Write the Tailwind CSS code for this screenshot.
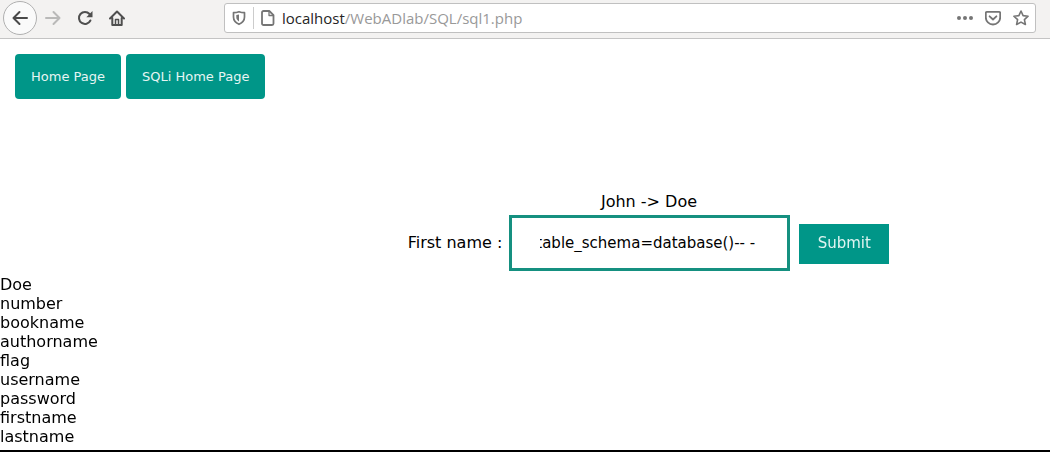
<!DOCTYPE html>
<html lang="en">
<head>
<meta charset="utf-8">
<title>sql1.php</title>
<script src="https://cdn.jsdelivr.net/npm/@tailwindcss/browser@4"></script>
</head>
<body class="flex min-h-screen flex-col bg-white font-['DejaVu_Sans',sans-serif] text-base leading-[19px] text-black">
<header class="flex h-[39px] items-center border-b border-[#c4c4c4] bg-[#f3f2f1] pr-[14px] pl-[3px] pb-[2px]">
  <nav class="flex flex-1 items-center" aria-label="Browser">
    <button aria-label="Back" class="flex size-[34px] shrink-0 items-center justify-center rounded-full border border-[#b0b0b0] bg-[#fafafa] text-[#4a4a4a]">
      <svg class="size-4" viewBox="0 0 16 16" fill="none" stroke="currentColor" stroke-width="2" stroke-linecap="round" stroke-linejoin="round"><path d="M15 8H1.500M7.500 2L1.500 8l6 6"/></svg>
    </button>
    <button aria-label="Forward" class="ml-2 flex size-4 shrink-0 items-center justify-center text-[#b9b9b8]">
      <svg class="size-4" viewBox="0 0 16 16" fill="none" stroke="currentColor" stroke-width="2" stroke-linecap="round" stroke-linejoin="round"><path d="M1 8h13.500M8.500 2l6 6-6 6"/></svg>
    </button>
    <button aria-label="Reload" class="ml-4 flex size-4 shrink-0 items-center justify-center text-[#4f4f4f]">
      <svg class="size-4" viewBox="0 0 16 16" fill="none" stroke="currentColor" stroke-width="2" stroke-linecap="round"><path d="M13.400 10.500A6 6 0 1 1 12.500 4"/><path d="M15.500 1v6.200H9.300z" fill="currentColor" stroke="none"/></svg>
    </button>
    <button aria-label="Home" class="ml-4 flex size-4 shrink-0 items-center justify-center text-[#4f4f4f]">
      <svg class="size-4" viewBox="0 0 16 16" fill="none" stroke="currentColor" stroke-width="2" stroke-linecap="round" stroke-linejoin="round"><path d="M1 8.500L8 1.500l7 7M3.300 8v7h9.400V8"/><path d="M6.500 14.500V9.500h3v5" stroke-width="1.500"/></svg>
    </button>
    <div class="ml-[99px] flex h-[30px] min-w-0 flex-1 items-center rounded-[3px] border border-[#c0c0c0] bg-white pr-[6px] pl-[6px] text-[#757575]">
      <svg class="size-4 shrink-0" viewBox="0 0 16 16" fill="none" stroke="currentColor" stroke-width="1.700" stroke-linejoin="round"><path d="M8 1.700C6.200 2.300 4.400 2.600 2.500 2.700V7c0 3.400 2.200 5.800 5.500 7.300 3.300-1.500 5.500-3.900 5.500-7.300V2.700C11.600 2.600 9.800 2.300 8 1.700z"/><path d="M8 4.500v7C6.200 10.400 5.300 9 5.300 7V5.100z" fill="currentColor" stroke="none"/></svg>
      <span class="ml-[6px] h-[22px] w-px shrink-0 bg-[#cccccc]"></span>
      <svg class="ml-[6px] size-4 shrink-0" viewBox="0 0 16 16" fill="none" stroke="currentColor" stroke-width="1.800" stroke-linejoin="round"><path d="M3.500 1h5.800l4.200 4.200v8.300a1.500 1.500 0 0 1-1.500 1.500H3.500A1.500 1.500 0 0 1 2 13.500v-11A1.500 1.500 0 0 1 3.500 1z"/><path d="M9 1v4.500h4.500" stroke-width="1.300"/></svg>
      <div class="ml-[6px] flex-1 truncate font-['Open_Sans','Noto_Sans',sans-serif] text-[15px] leading-[22px] text-[#999999]"><span class="text-[#252525]">localhost</span>/WebADlab/SQL/sql1.php</div>
      <button aria-label="Page actions"><svg class="size-4" viewBox="0 0 16 16" fill="currentColor"><circle cx="2" cy="8" r="2"/><circle cx="8" cy="8" r="2"/><circle cx="14" cy="8" r="2"/></svg></button>
      <button aria-label="Save to Pocket" class="ml-3"><svg class="size-4" viewBox="0 0 16 16" fill="none" stroke="currentColor" stroke-width="1.800" stroke-linecap="round" stroke-linejoin="round"><path d="M2 1.800h12a1.200 1.200 0 0 1 1.200 1.200v4.300a7.200 7.200 0 0 1-14.400 0V3A1.200 1.200 0 0 1 2 1.800z"/><path d="M4.600 6.300L8 9.500l3.400-3.200"/></svg></button>
      <button aria-label="Bookmark" class="ml-3"><svg class="size-4" viewBox="0 0 16 16" fill="none" stroke="currentColor" stroke-width="1.600" stroke-linejoin="round"><path d="M8 1l2.100 4.600 5 .6-3.700 3.400 1 4.900L8 12.100l-4.400 2.400 1-4.900L.9 6.200l5-.6z"/></svg></button>
    </div>
  </nav>
</header>
<main class="flex-1">
  <div class="flex gap-[5px] px-[15px] pt-[15px] text-[13px] text-[#e6f5f3]">
    <button class="h-[45px] rounded bg-[#009688] px-4">Home Page</button>
    <button class="h-[45px] rounded bg-[#009688] px-4">SQLi Home Page</button>
  </div>
  <form class="mt-[93px] pl-[248px]">
    <p class="text-center">John -&gt; Doe</p>
    <div class="mt-1 flex items-baseline justify-center">
      <label for="firstname">First name :</label>
      <input id="firstname" type="text" value="table_schema=database()-- -" class="ml-[7px] h-14 w-[281px] border-[3px] border-[#159080] pr-8 pl-7 text-[15px] caret-transparent outline-none">
      <button type="submit" class="mr-px ml-[9px] h-10 w-[90px] bg-[#009688] text-[15px] text-[#e0f4f1]">Submit</button>
    </div>
  </form>
  <ul class="mt-1">
    <li>Doe</li>
    <li>number</li>
    <li>bookname</li>
    <li>authorname</li>
    <li>flag</li>
    <li>username</li>
    <li>password</li>
    <li>firstname</li>
    <li>lastname</li>
  </ul>
</main>
<footer class="h-[2px] bg-black"></footer>
<script>
// Keep the end of a long value in view
window.addEventListener('load', () => {
  const field = document.getElementById('firstname');
  field.focus();
  field.setSelectionRange(field.value.length, field.value.length);
  field.scrollLeft = field.scrollWidth;
});
</script>
</body>
</html>
